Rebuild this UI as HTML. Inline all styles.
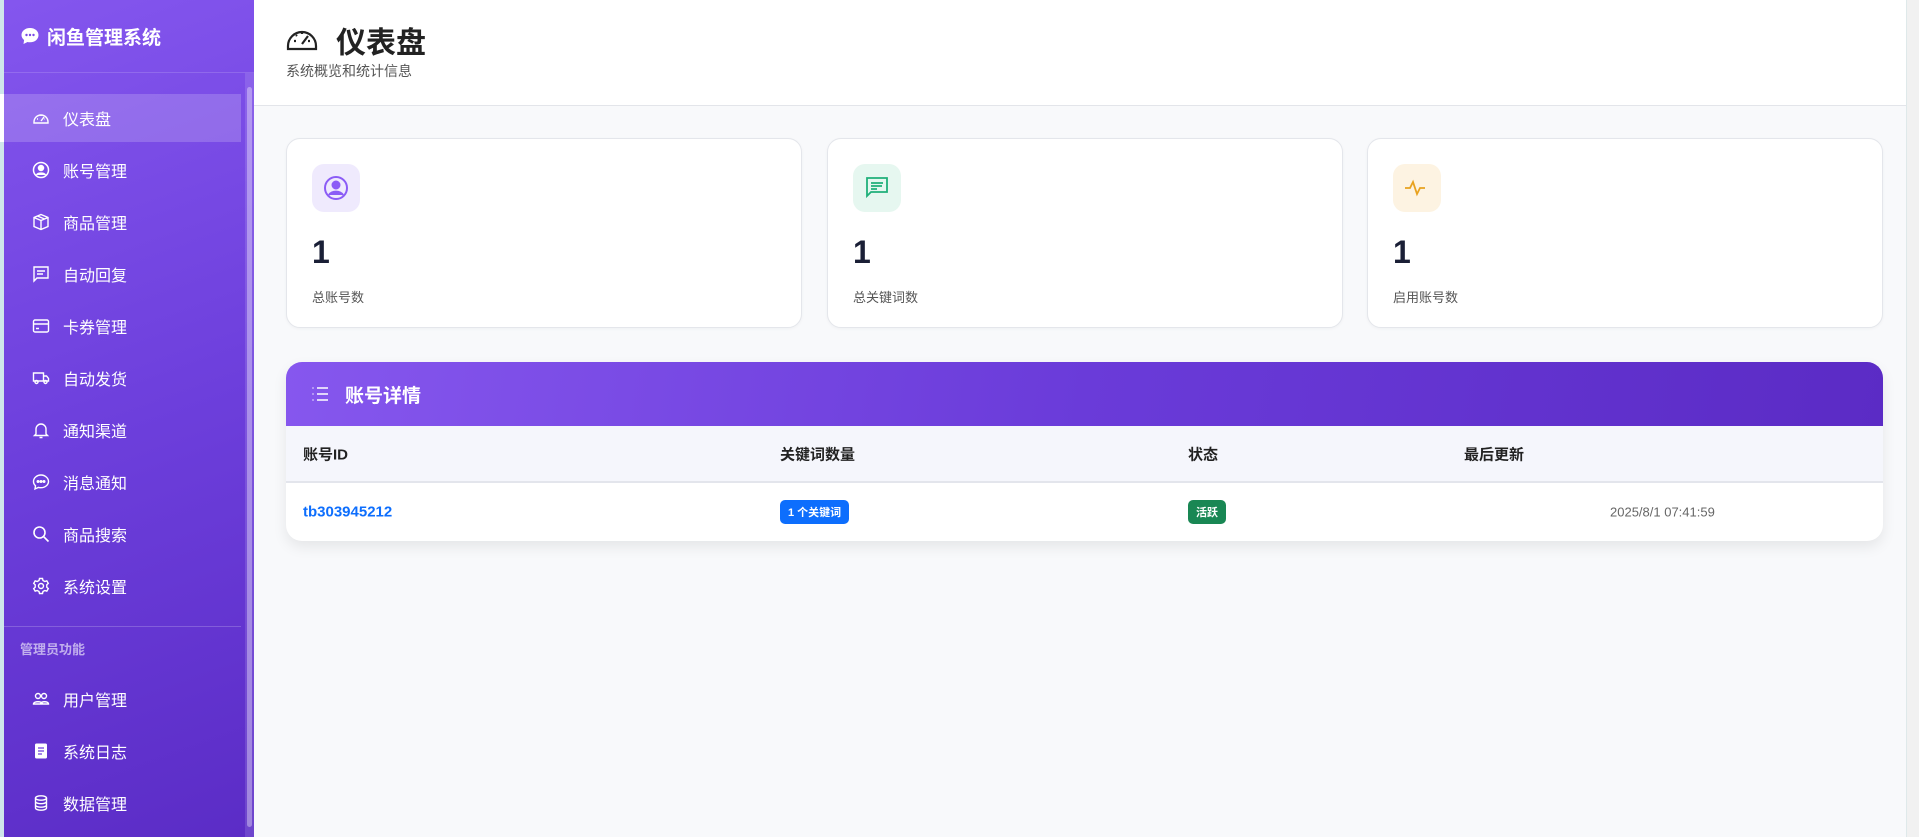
<!DOCTYPE html>
<html><head><meta charset="utf-8"><style>
*{box-sizing:border-box;margin:0;padding:0}
body{width:1919px;height:837px;overflow:hidden;font-family:"Liberation Sans","Noto Sans CJK SC",sans-serif;background:#f8f9fb;position:relative}
.sb{position:absolute;left:0;top:0;width:254px;height:837px;background:linear-gradient(160deg,#8456ee 0%,#6d3fdc 50%,#5b2cc6 100%);border-left:4px solid #cfe6ea}
.brand{height:73px;border-bottom:1px solid rgba(255,255,255,.15);color:#fff;font-weight:bold;font-size:19px;display:flex;align-items:center;padding-left:16px;gap:7px}
.scr{position:absolute;left:241px;top:73px;width:9px;height:764px;background:rgba(255,255,255,.12)}
.scr i{position:absolute;left:2px;top:14px;width:5px;height:740px;border-radius:3px;background:rgba(255,255,255,.35)}
.nav{position:absolute;left:0;width:237px;height:48px;display:flex;align-items:center;color:#fff;font-size:16px}
.nav svg{position:absolute;left:28px;top:15px}
.nav span{position:absolute;left:59px}
.nav.act{background:rgba(255,255,255,.18);border-left:4px solid #fff;margin-left:-4px;width:241px}
.hr{position:absolute;left:0;width:237px;top:626px;border-top:1px solid rgba(255,255,255,.2)}
.adm{position:absolute;left:16px;top:639px;color:rgba(255,255,255,.6);font-size:13px;font-weight:bold}
.hd{position:absolute;left:254px;top:0;width:1652px;height:106px;background:#fff;border-bottom:1px solid #e3e5ea}
.hd h1{position:absolute;left:82px;top:18px;font-size:30px;font-weight:bold;color:#222}
.hd p{position:absolute;left:32px;top:61px;font-size:14px;color:#555}
.rs{position:absolute;right:0;top:0;width:13px;height:837px;background:#f1f1f1;border-left:1px solid #dfe9ea}
.card{position:absolute;top:138px;width:516px;height:190px;background:#fff;border:1px solid #e4e6eb;border-radius:14px;box-shadow:0 1px 3px rgba(0,0,0,.04)}
.ib{position:absolute;left:25px;top:25px;width:48px;height:48px;border-radius:12px;display:flex;align-items:center;justify-content:center}
.card b{position:absolute;left:25px;top:95px;font-size:32px;color:#1a1f36}
.card span{position:absolute;left:25px;top:148px;font-size:13px;color:#555}
.tb{position:absolute;left:286px;top:362px;width:1597px;height:179px;background:#fff;border-radius:16px;box-shadow:0 6px 14px rgba(0,0,0,.08);overflow:hidden}
.th{height:64px;background:linear-gradient(100deg,#8657ee,#6a3bd9 50%,#5b2bc5);color:#fff;font-size:19px;font-weight:bold;display:flex;align-items:center;padding-left:59px;position:relative}
.th svg{position:absolute;left:25px;top:24px}
.hr2{height:57px;background:#f5f6fc;border-bottom:2px solid #e3e5ec;position:relative;font-size:15px;font-weight:bold;color:#222}
.hr2 div,.row div{position:absolute;top:50%;transform:translateY(-50%)}
.row{height:58px;position:relative;font-size:13px}
.bd{color:#fff;font-size:11px;font-weight:bold;border-radius:5px;padding:4px 8px}
</style></head><body>
<div class="sb">
 <div class="brand"><svg width="20" height="20" viewBox="0 0 20 20"><path d="M10 2C5 2 1.5 5.2 1.5 9c0 2 1 3.8 2.6 5L3.5 18l4-2c.8.2 1.6.3 2.5.3 5 0 8.5-3.2 8.5-7.2S15 2 10 2z" fill="#fff"/><circle cx="6.5" cy="9" r="1.2" fill="#7a4ae6"/><circle cx="10" cy="9" r="1.2" fill="#7a4ae6"/><circle cx="13.5" cy="9" r="1.2" fill="#7a4ae6"/></svg>闲鱼管理系统</div>
 <div class="scr"><i></i></div>
 <div class="nav act" style="top:94px"><svg width="18" height="18" viewBox="0 0 18 18" fill="none" stroke="#fff" stroke-width="1.4"><path d="M2 13a7 7 0 1 1 14 0v1H2z"/><path d="M9 12l3-4M5 10h1M12.5 10h.5M9 6v1"/></svg><span>仪表盘</span></div>
 <div class="nav" style="top:146px"><svg width="18" height="18" viewBox="0 0 18 18" fill="none" stroke="#fff" stroke-width="1.5"><circle cx="9" cy="9" r="7.5"/><circle cx="9" cy="7" r="2.5" fill="#fff"/><path d="M4.5 14c1.5-2.5 7.5-2.5 9 0" fill="#fff"/></svg><span>账号管理</span></div>
 <div class="nav" style="top:198px"><svg width="18" height="18" viewBox="0 0 18 18" fill="none" stroke="#fff" stroke-width="1.4"><path d="M9 1.5l7 3v9l-7 3-7-3v-9zM2 4.5l7 3 7-3M9 7.5v9M5.5 3l7 3"/></svg><span>商品管理</span></div>
 <div class="nav" style="top:250px"><svg width="18" height="18" viewBox="0 0 18 18" fill="none" stroke="#fff" stroke-width="1.4"><path d="M2 2h14v11H5l-3 3z"/><path d="M5 6h8M5 9h6"/></svg><span>自动回复</span></div>
 <div class="nav" style="top:302px"><svg width="18" height="18" viewBox="0 0 18 18" fill="none" stroke="#fff" stroke-width="1.4"><rect x="1.5" y="3" width="15" height="12" rx="1.5"/><path d="M1.5 7h15M4 11.5h3"/></svg><span>卡券管理</span></div>
 <div class="nav" style="top:354px"><svg width="18" height="18" viewBox="0 0 18 18" fill="none" stroke="#fff" stroke-width="1.4"><path d="M1.5 4h10v8h-10zM11.5 7h3l2 2.5V12h-5"/><circle cx="4.5" cy="13" r="1.5"/><circle cx="13.5" cy="13" r="1.5"/></svg><span>自动发货</span></div>
 <div class="nav" style="top:406px"><svg width="18" height="18" viewBox="0 0 18 18" fill="none" stroke="#fff" stroke-width="1.4"><path d="M4 13V8a5 5 0 0 1 10 0v5l1.5 1.5h-13zM7.5 16.5h3"/></svg><span>通知渠道</span></div>
 <div class="nav" style="top:458px"><svg width="18" height="18" viewBox="0 0 18 18" fill="none" stroke="#fff" stroke-width="1.4"><path d="M9 2C5 2 1.5 4.8 1.5 8.5c0 1.7.8 3.2 2 4.3L3 16l3.5-1.6c.8.2 1.600.3 2.5.3 4 0 7.5-2.8 7.5-6.2S13 2 9 2z"/><circle cx="6" cy="8.5" r=".8" fill="#fff"/><circle cx="9" cy="8.5" r=".8" fill="#fff"/><circle cx="12" cy="8.5" r=".8" fill="#fff"/></svg><span>消息通知</span></div>
 <div class="nav" style="top:510px"><svg width="18" height="18" viewBox="0 0 18 18" fill="none" stroke="#fff" stroke-width="1.6"><circle cx="7.5" cy="7.5" r="5.5"/><path d="M11.5 11.5l5 5"/></svg><span>商品搜索</span></div>
 <div class="nav" style="top:562px"><svg width="18" height="18" viewBox="0 0 18 18" fill="none" stroke="#fff" stroke-width="1.4"><circle cx="9" cy="9" r="2.5"/><path d="M7.5 1.5h3l.5 2 1.8 1 2-.7 1.5 2.6-1.5 1.4v2.4l1.5 1.4-1.5 2.6-2-.7-1.8 1-.5 2h-3l-.5-2-1.8-1-2 .7-1.5-2.6 1.5-1.4V7.8L1.7 6.4l1.5-2.6 2 .7L7 3.5z"/></svg><span>系统设置</span></div>
 <div class="hr"></div>
 <div class="adm">管理员功能</div>
 <div class="nav" style="top:675px"><svg width="18" height="18" viewBox="0 0 18 18" fill="none" stroke="#fff" stroke-width="1.4"><circle cx="6" cy="6" r="2.5"/><circle cx="12" cy="6" r="2.5"/><path d="M1.5 14c0-3 9-3 9 0zM8.5 14c0-3 8-3 8 0z"/></svg><span>用户管理</span></div>
 <div class="nav" style="top:727px"><svg width="18" height="18" viewBox="0 0 18 18"><rect x="3" y="1.5" width="12" height="15" rx="1.5" fill="#fff"/><path d="M6 6h6M6 9h6M6 12h4" stroke="#6d3fdc" stroke-width="1.2"/></svg><span>系统日志</span></div>
 <div class="nav" style="top:779px"><svg width="18" height="18" viewBox="0 0 18 18" fill="none" stroke="#fff" stroke-width="1.4"><ellipse cx="9" cy="4" rx="5.5" ry="2.2"/><path d="M3.5 4v10c0 1.2 2.5 2.2 5.5 2.2s5.5-1 5.5-2.2V4M3.5 7.5c0 1.2 2.5 2.2 5.5 2.2s5.5-1 5.5-2.2M3.5 11c0 1.2 2.5 2.2 5.5 2.2s5.5-1 5.5-2.2"/></svg><span>数据管理</span></div>
</div>
<div class="hd">
 <svg style="position:absolute;left:32px;top:24px" width="32" height="28" viewBox="0 0 32 28" fill="none" stroke="#222" stroke-width="2.2"><path d="M2 22a14 14 0 1 1 28 0v3H2z"/><path d="M16 20l6-8M8 17h2M22 17h2M16 8v2M10 11l1 1"/></svg>
 <h1>仪表盘</h1>
 <p>系统概览和统计信息</p>
</div>
<div class="rs"></div>
<div class="card" style="left:286px"><div class="ib" style="background:#efeafd"><svg width="26" height="26" viewBox="0 0 26 26" fill="none" stroke="#8b5cf6" stroke-width="2"><circle cx="13" cy="13" r="11"/><circle cx="13" cy="10" r="3.5" fill="#8b5cf6"/><path d="M6 20c3-4.5 11-4.5 14 0" fill="#8b5cf6"/></svg></div><b>1</b><span>总账号数</span></div>
<div class="card" style="left:827px"><div class="ib" style="background:#e6f7f0"><svg width="26" height="26" viewBox="0 0 26 26" fill="none" stroke="#20b07a" stroke-width="1.8"><path d="M3 3h20v14H7l-4 4z"/><path d="M7 8h12M7 11h11M7 14h6"/></svg></div><b>1</b><span>总关键词数</span></div>
<div class="card" style="left:1367px"><div class="ib" style="background:#fdf3e2"><svg width="26" height="26" viewBox="0 0 26 26" fill="none" stroke="#e8a21f" stroke-width="1.8"><path d="M1 13h5l3-6 4 12 3-6h5"/></svg></div><b>1</b><span>启用账号数</span></div>
<div class="tb">
 <div class="th"><svg width="18" height="16" viewBox="0 0 18 16" fill="none" stroke="#fff" stroke-width="1.6"><path d="M6 2h11M6 8h11M6 14h11M1.5 2h1M1.5 8h1M1.5 14h1"/></svg>账号详情</div>
 <div class="hr2"><div style="left:17px">账号ID</div><div style="left:494px">关键词数量</div><div style="left:902px">状态</div><div style="left:1178px">最后更新</div></div>
 <div class="row"><div style="left:17px;color:#0d6efd;font-weight:bold;font-size:15px">tb303945212</div><div class="bd" style="left:494px;background:#0d6efd">1 个关键词</div><div class="bd" style="left:902px;background:#198754">活跃</div><div style="left:1324px;color:#666">2025/8/1 07:41:59</div></div>
</div>
</body></html>
